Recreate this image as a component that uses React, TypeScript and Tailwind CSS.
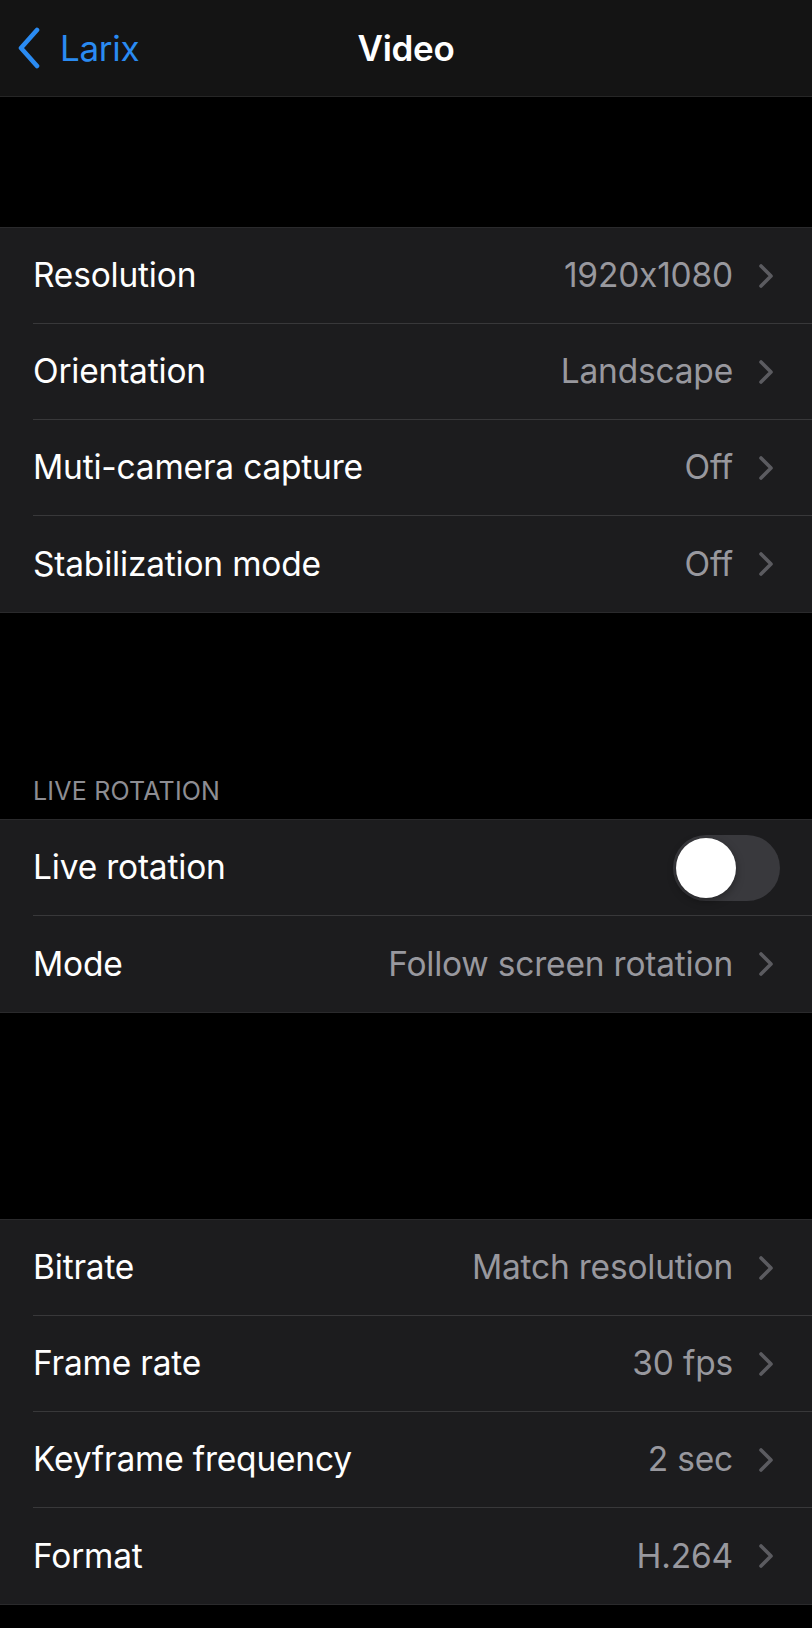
const Chevron = () => (
  <svg width="16" height="26" viewBox="0 0 16 26" fill="none" className="shrink-0">
    <path d="M3 3L13 13L3 23" stroke="#5b5b60" strokeWidth="3.6" strokeLinecap="round" strokeLinejoin="round" />
  </svg>
);

type RowProps = {
  label: string;
  value?: string;
  last?: boolean;
  toggle?: boolean;
};

const Row = ({ label, value, last, toggle }: RowProps) => (
  <div className="pl-[33px]">
    <div className={`h-[96px] flex items-center ${last ? '' : 'border-b border-[#38383a]'} ${toggle ? 'pr-[32px]' : 'pr-[38px]'}`}>
      <span className="text-white text-[33.5px] tracking-[-0.2px]">{label}</span>
      <div className="ml-auto flex items-center gap-[25px]">
        {value && <span className="text-[#98989e] text-[33.5px] tracking-[-0.2px]">{value}</span>}
        {toggle ? (
          <div className="w-[107px] h-[66px] rounded-full bg-[#39393d] p-[3px] flex items-center">
            <div className="w-[60px] h-[60px] rounded-full bg-white shadow-[0_3px_8px_rgba(0,0,0,0.35)]"></div>
          </div>
        ) : (
          <Chevron />
        )}
      </div>
    </div>
  </div>
);

const Group = ({ children }: { children: React.ReactNode }) => (
  <div className="bg-[#1c1c1e] border-y border-[#2a2a2c]">{children}</div>
);

export default function App() {
  return (
    <div className="w-[812px] h-[1628px] bg-black overflow-hidden" style={{ fontFamily: 'Inter, "Noto Sans", sans-serif' }}>
      <div className="h-[97px] bg-[#141414] border-b border-[#262626] relative flex items-center justify-center">
        <div className="absolute left-[17px] top-0 h-full flex items-center gap-[19px]">
          <svg width="24" height="42" viewBox="0 0 24 42" fill="none">
            <path d="M20 3L4 21L20 39" stroke="#2a8bf2" strokeWidth="4.6" strokeLinecap="round" strokeLinejoin="round" />
          </svg>
          <span className="text-[#2a8bf2] text-[35px] tracking-[-0.3px]">Larix</span>
        </div>
        <span className="text-white text-[35px] font-semibold tracking-[-0.3px]">Video</span>
      </div>

      <div className="h-[130px]"></div>

      <Group>
        <Row label="Resolution" value="1920x1080" />
        <Row label="Orientation" value="Landscape" />
        <Row label="Muti-camera capture" value="Off" />
        <Row label="Stabilization mode" value="Off" last />
      </Group>

      <div className="h-[206px] flex items-end pl-[33px] pb-[9px]">
        <span className="text-[#8d8d93] text-[25px] uppercase tracking-[0.2px]">Live rotation</span>
      </div>

      <Group>
        <Row label="Live rotation" toggle />
        <Row label="Mode" value="Follow screen rotation" last />
      </Group>

      <div className="h-[206px]"></div>

      <Group>
        <Row label="Bitrate" value="Match resolution" />
        <Row label="Frame rate" value="30 fps" />
        <Row label="Keyframe frequency" value="2 sec" />
        <Row label="Format" value="H.264" last />
      </Group>
    </div>
  );
}
